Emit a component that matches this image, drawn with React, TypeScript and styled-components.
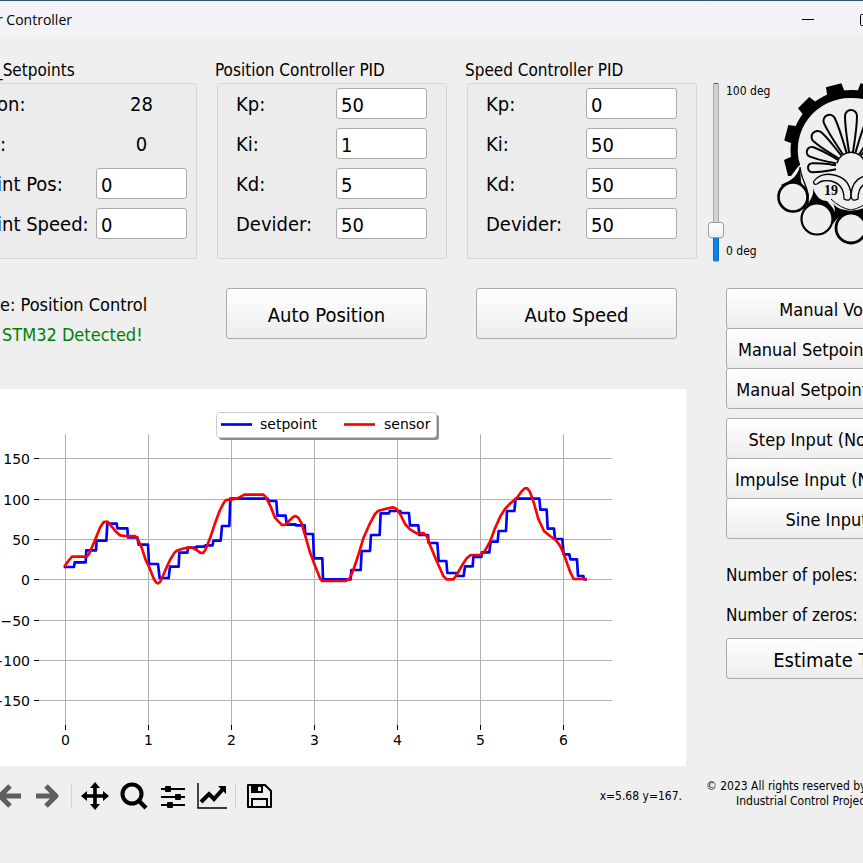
import React, { useState } from "react";
import styled, { createGlobalStyle } from "styled-components";

const uiFont = `"DejaVu Sans Condensed", "Noto Sans", sans-serif`;

const GlobalStyle = createGlobalStyle`
  *, *::before, *::after { box-sizing: border-box; }
  html, body { margin: 0; background: #efefef; overflow: hidden; }
  html, body, #root { min-height: 100vh; }
  body, button, input { font-family: ${uiFont}; color: #000; }
  h1, h2, p { margin: 0; font-weight: 400; }
`;

const Frame = styled.div`
  width: calc(100% + 64px);
  min-height: 100vh;
`;

const TitleBar = styled.header`
  display: flex;
  align-items: center;
  justify-content: space-between;
  height: 38px;
  border-top: 1px solid #33556b;
  background: linear-gradient(90deg, #f2f3f9 70%, #f1f2f4);
`;

const Title = styled.h1`
  margin-left: -3px;
  font: 400 14px/20px "Open Sans", "Noto Sans", sans-serif;
  white-space: nowrap;
`;

const WindowButtons = styled.div`
  display: flex;
  gap: 34px;
  padding-right: 49px;
`;

const WindowButton = styled.button`
  display: flex;
  width: 24px;
  height: 24px;
  padding: 6px;
  border: 0;
  background: none;
`;

const TopRow = styled.section`
  display: flex;
  align-items: flex-start;
  padding-top: 23px;
`;

const Groups = styled.div`
  display: flex;
  flex: 1;
  gap: 20px;
  min-width: 0;
`;

const Group = styled.section<{ $grow?: boolean }>`
  flex: ${(p) => (p.$grow ? "1 1 0" : "0 0 230px")};
  min-width: 0;
`;

const GroupTitle = styled.h2<{ $flush?: boolean }>`
  margin-left: ${(p) => (p.$flush ? "-5px" : "-2px")};
  font-size: 17px;
  line-height: 19px;
  height: 22px;
  white-space: nowrap;
`;

const GroupBox = styled.div<{ $open?: boolean }>`
  display: flex;
  flex-direction: column;
  gap: 9px;
  height: 176px;
  padding: 4px ${(p) => (p.$open ? "9px" : "19px")} 0 ${(p) => (p.$open ? "0" : "18px")};
  border: 1px solid #d6d6d6;
  border-left-width: ${(p) => (p.$open ? "0" : "1px")};
  border-radius: ${(p) => (p.$open ? "0 2px 2px 0" : "2px")};
  background: #ececec;
`;

const Field = styled.label`
  display: flex;
  align-items: center;
  justify-content: space-between;
  height: 31px;
  font-size: 20px;
  line-height: 24px;
  white-space: nowrap;
`;

const Caption = styled.span<{ $bleed?: boolean }>`
  margin-left: ${(p) => (p.$bleed ? "-3px" : "0")};
`;

const TextBox = styled.input`
  width: 91px;
  height: 31px;
  padding: 2px 4px 0;
  border: 1px solid #ababab;
  border-radius: 3px;
  background: #fff;
  font-size: 20px;
  outline: 0;
`;

const Reading = styled.output`
  width: 91px;
  text-align: center;
`;

const SliderBlock = styled.div`
  display: flex;
  gap: 2px;
  height: 179px;
  margin: 22px 0 0 11px;
`;

const Slider = styled.input<{ $value: number }>`
  appearance: none;
  writing-mode: vertical-lr;
  direction: rtl;
  width: 16px;
  height: 179px;
  margin: 0;
  background: none;

  &::-webkit-slider-runnable-track {
    width: 6px;
    height: 179px;
    border: 1px solid rgba(0, 0, 0, 0.2);
    border-radius: 2px;
    background: linear-gradient(0deg, #0a84e8 ${(p) => p.$value}%, #d2d2d2 ${(p) => p.$value}%);
  }

  &::-webkit-slider-thumb {
    appearance: none;
    width: 16px;
    height: 16px;
    margin-left: -6px;
    border: 1px solid #9c9c9c;
    border-radius: 3px;
    background: linear-gradient(#fff, #f0f0f0);
  }
`;

const ScaleLabels = styled.div`
  display: flex;
  flex-direction: column;
  justify-content: space-between;
  width: 50px;
  padding: 0 0 3px;
  font-size: 12px;
  line-height: 16px;
  white-space: nowrap;
`;

const EmblemSlot = styled.div`
  width: 151px;
  height: 165px;
  margin-top: 22px;
`;

const Workspace = styled.main`
  display: grid;
  grid-template-columns: minmax(0, 1fr) 201px;
  column-gap: 40px;
  padding-top: 26px;
`;

const Column = styled.div`
  min-width: 0;
`;

const ModeRow = styled.div`
  display: flex;
  align-items: flex-start;
  gap: 49px;
  height: 101px;
  padding-right: 9px;
`;

const Status = styled.div`
  flex: 1;
  min-width: 0;
  padding-top: 2px;
  font-size: 18px;
  line-height: 30px;
  white-space: nowrap;
`;

const Detected = styled.p`
  padding-left: 2px;
  color: #008000;
`;

const PushButton = styled.button<{ $size?: "large" | "medium" }>`
  flex: none;
  width: 201px;
  height: ${(p) => (p.$size === "large" ? "51px" : "41px")};
  padding: 2px 0 0;
  border: 1px solid #ababab;
  border-radius: 3px;
  background: linear-gradient(#fff, #ededed);
  font-size: ${(p) => (p.$size ? "20px" : "18px")};
  white-space: nowrap;
`;

const ButtonStack = styled.div`
  display: flex;
  flex-direction: column;
  margin-bottom: 9px;

  ${PushButton} + ${PushButton} { margin-top: -1px; }
`;

const Count = styled.p`
  font-size: 17px;
  line-height: 40px;
  white-space: nowrap;
`;

const Counts = styled.div`
  padding: 7px 0 3px;
`;

const Plot = styled.figure`
  height: 377px;
  margin: 0;
  background: #fff;

  svg { display: block; }
  text { font-family: "DejaVu Sans", sans-serif; font-size: 14px; }
`;

const ToolBar = styled.nav`
  display: flex;
  align-items: center;
  height: 60px;
  padding-right: 4px;
`;

const Tool = styled.button`
  display: flex;
  align-items: center;
  justify-content: center;
  flex: none;
  width: 39px;
  height: 32px;
  padding: 0;
  border: 0;
  background: none;

  &:first-child { width: 28px; justify-content: flex-start; }
`;

const Divider = styled.span`
  width: 1px;
  height: 25px;
  margin: 0 3px 0 4px;
  background: #d2d2d2;
`;

const Coordinates = styled.output`
  margin-left: auto;
  font-size: 12px;
`;

const Copyright = styled.footer`
  margin: 100px 0 0 -20px;
  font-size: 12px;
  line-height: 15px;
  white-space: nowrap;

  p + p { padding-left: 30px; }
`;

const SETPOINT =
  "195,534 222,534 224,520 257,520 259,484 288,484 290,455 319,455 322,404 350,404 352,418 382,418 384,445 412,445 416,467 444,467 447,525 474,525 479,567 506,567 510,533 536,533 538,491 562,491 564,476 590,476 590,473 614,473 616,469 638,469 640,455 662,455 666,411 688,411 691,329 803,329 807,336 829,336 832,380 857,380 860,407 887,406 888,409 914,409 916,435 939,435 942,508 967,508 969,571 1052,571 1054,543 1082,543 1085,486 1110,486 1113,438 1139,438 1142,373 1167,373 1169,366 1201,366 1202,372 1227,372 1230,409 1255,409 1258,438 1284,438 1286,462 1312,462 1316,516 1339,516 1342,552 1369,552 1370,561 1391,561 1395,532 1418,532 1420,504 1444,504 1446,490 1468,490 1472,458 1493,458 1496,426 1518,426 1521,366 1543,366 1547,329 1618,329 1621,362 1640,362 1643,419 1662,419 1665,450 1687,450 1691,496 1708,496 1711,511 1731,511 1734,561 1750,561 1752,571 1757,571";

const SENSOR =
  "195,530 205,516 216,503 260,503 268,493 285,453 300,416 311,399 322,398 333,410 345,425 360,439 375,441 405,441 412,448 425,476 437,513 447,533 462,571 468,580 474,583 480,579 490,558 497,541 510,513 522,493 530,485 545,480 560,476 575,476 590,483 600,491 609,492 616,483 630,448 645,403 660,363 672,340 678,333 695,331 712,328 722,323 733,317 790,317 798,325 812,353 825,386 838,400 846,408 856,407 870,393 878,385 886,381 894,385 905,403 918,448 930,490 945,530 960,568 966,576 1036,576 1048,570 1060,543 1075,498 1090,448 1110,403 1125,375 1134,366 1155,360 1178,355 1190,360 1202,378 1215,405 1230,421 1250,433 1270,432 1280,441 1290,468 1310,516 1330,561 1340,571 1360,571 1370,558 1385,531 1400,508 1412,498 1442,498 1455,485 1470,458 1485,418 1502,380 1515,360 1530,344 1550,328 1565,307 1574,298 1582,298 1590,309 1602,343 1615,390 1632,426 1650,441 1667,453 1680,470 1692,496 1710,548 1721,570 1757,570";

const X_TICKS = [65, 148, 231, 314, 397, 480, 563].map((x, i) => ({ x: x + 0.5, label: String(i) }));
const Y_TICKS = [
  { y: 69.5, label: "150" },
  { y: 110.5, label: "100" },
  { y: 150.5, label: "50" },
  { y: 190.5, label: "0" },
  { y: 231.5, label: "−50" },
  { y: 271.5, label: "−100" },
  { y: 311.5, label: "−150" },
];

function Chart() {
  return (
    <Plot>
      <svg width="100%" height="377" viewBox="0 0 686 377" preserveAspectRatio="xMinYMin meet" role="img" aria-label="setpoint and sensor">
        {X_TICKS.map(({ x, label }) => (
          <g key={label}>
            <path d={`M${x} 45V336`} stroke="#b0b0b0" />
            <path d={`M${x} 336v5`} stroke="#000" />
            <text x={x} y="356" textAnchor="middle">{label}</text>
          </g>
        ))}
        {Y_TICKS.map(({ y, label }) => (
          <g key={label}>
            <path d={`M39 ${y}H612`} stroke="#b0b0b0" />
            <path d={`M34 ${y}h5`} stroke="#000" />
            <text x="30" y={y + 5} textAnchor="end">{label}</text>
          </g>
        ))}
        <g transform="scale(0.33333)" fill="none" strokeWidth="8" strokeLinejoin="round" strokeLinecap="square">
          <polyline points={SETPOINT} stroke="#00f" />
          <polyline points={SENSOR} stroke="#f00" />
        </g>
        <rect x="219" y="26" width="220" height="25" rx="3" fill="#8c8c8c" />
        <rect x="216.5" y="23.5" width="220" height="25" rx="3" fill="#fff" stroke="#ccc" />
        <path d="M221 35.500h31" stroke="#00f" strokeWidth="2.700" />
        <text x="260" y="40">setpoint</text>
        <path d="M344 35.500h31" stroke="#f00" strokeWidth="2.700" />
        <text x="384" y="40">sensor</text>
      </svg>
    </Plot>
  );
}

const PETALS = [
  { angle: -25, length: 57, half: 6 },
  { angle: -48, length: 51, half: 6 },
  { angle: -69, length: 47, half: 5 },
  { angle: -91, length: 43, half: 4.5 },
];

function petalPath(l: number, w: number) {
  return `M-2-15C-4-28-${w}-${l - 17}-${w}-${l - w}A${w} ${w} 0 0 1 ${w}-${l - w}C${w}-${l - 17} 4-28 2-15`;
}

function EmblemHalf() {
  return (
    <>
      {[-15, -45, -75].map((a) => (
        <path key={a} d="M-9-58L-8-67H8L9-58Z" transform={`translate(75 67) rotate(${a})`} />
      ))}
      <path d="M8 77L19 72L24 81L15 93H12Z" />
      <path d="M75 7A60 60 0 0 0 18 87L24 82A52 52 0 0 1 75 15Z" />
      <path d="M5 102C13 98 20 96 24 84L25 99C27 104 31 105 31 111C31 119 30 123 30 128Z" />
      <path d="M24 84C25 96 31 102 32 112C33 120 31 124 30 128" fill="none" stroke="#000" strokeWidth="1.300" />
      <path d="M37 105C39 115 30 119 30 128L38 121C44 119 52 124 56 130L58 136C62 128 54 122 51 118C45 118 40 114 37 105Z" />
      <path d="M55 116C60 128 68 126 75 128V133C66 131 61 134 57 141L54 137C58 132 62 128 55 116Z" />
      <path d="M55 116Q64 125 75 127" fill="none" stroke="#000" />
      <g fill="#efefef" stroke="#000">
        <circle cx="17" cy="114" r="14.500" strokeWidth="2.600" />
        <circle cx="41" cy="136" r="15.500" strokeWidth="2.200" />
      </g>
      <g fill="none" stroke="#000" strokeWidth="2">
        {PETALS.map((p) => (
          <path key={p.angle} d={petalPath(p.length, p.half)} transform={`translate(75 84) rotate(${p.angle})`} />
        ))}
        <path strokeWidth="1.300" d="M38 98C42 92 50 90 58 92C68 94 74 101 75 111C75 118 72 118 68 116C68 106 64 100 55 98C48 97 45 98 41 101C38 102 37 100 38 98Z" />
      </g>
    </>
  );
}

function Emblem() {
  return (
    <svg width="150" height="165" viewBox="0 0 150 165" role="img" aria-label="University emblem">
      <EmblemHalf />
      <g transform="translate(150 0) scale(-1 1)">
        <EmblemHalf />
      </g>
      <path d={petalPath(57, 6)} transform="translate(75 84)" fill="none" stroke="#000" strokeWidth="2" />
      <path d="M61 80A14.500 14.500 0 0 1 89 80" fill="none" stroke="#000" strokeWidth="1.500" />
      <circle cx="75" cy="145" r="15" fill="#efefef" stroke="#000" strokeWidth="2.800" />
      <text x="48" y="112" fontFamily="Liberation Serif, serif" fontWeight="700" fontSize="14">19</text>
    </svg>
  );
}

function Arrow({ back }: { back?: boolean }) {
  return (
    <svg width="24" height="26" viewBox="0 0 24 26" fill="none" stroke="#5e5e5e" strokeWidth="5" strokeLinejoin="round">
      <path d={back ? "M21 13H0M10 3L0 13L10 23" : "M0 13H20M10 3L20 13L10 23"} />
    </svg>
  );
}

function PidGroup({ title, values }: { title: string; values: string[] }) {
  return (
    <Group>
      <GroupTitle>{title}</GroupTitle>
      <GroupBox>
        {["Kp:", "Ki:", "Kd:", "Devider:"].map((name, i) => (
          <Field key={name}>
            <Caption>{name}</Caption>
            <TextBox defaultValue={values[i]} />
          </Field>
        ))}
      </GroupBox>
    </Group>
  );
}

export default function App() {
  const [angle, setAngle] = useState(14);
  return (
    <>
      <GlobalStyle />
      <Frame>
        <TitleBar>
          <Title>r Controller</Title>
          <WindowButtons>
            <WindowButton aria-label="Minimize">
              <svg width="12" height="12" stroke="#000"><path d="M0 5.500H12" /></svg>
            </WindowButton>
            <WindowButton aria-label="Maximize">
              <svg width="12" height="12" fill="none" stroke="#000"><rect x="0.500" y="0.500" width="11" height="11" rx="1" /></svg>
            </WindowButton>
          </WindowButtons>
        </TitleBar>

        <TopRow>
          <Groups>
            <Group $grow>
              <GroupTitle $flush>_Setpoints</GroupTitle>
              <GroupBox $open>
                <Field as="div"><Caption $bleed>on:</Caption><Reading>28</Reading></Field>
                <Field as="div"><Caption>:</Caption><Reading>0</Reading></Field>
                <Field><Caption $bleed>int Pos:</Caption><TextBox defaultValue="0" /></Field>
                <Field><Caption $bleed>int Speed:</Caption><TextBox defaultValue="0" /></Field>
              </GroupBox>
            </Group>
            <PidGroup title="Position Controller PID" values={["50", "1", "5", "50"]} />
            <PidGroup title="Speed Controller PID" values={["0", "50", "50", "50"]} />
          </Groups>
          <SliderBlock>
            <Slider
              type="range"
              aria-label="Angle"
              $value={angle}
              value={angle}
              onChange={(e) => setAngle(Number(e.target.value))}
            />
            <ScaleLabels>
              <span>100 deg</span>
              <span>0 deg</span>
            </ScaleLabels>
          </SliderBlock>
          <EmblemSlot><Emblem /></EmblemSlot>
        </TopRow>

        <Workspace>
          <Column>
            <ModeRow>
              <Status>
                <p>e: Position Control</p>
                <Detected>STM32 Detected!</Detected>
              </Status>
              <PushButton $size="large">Auto Position</PushButton>
              <PushButton $size="large">Auto Speed</PushButton>
            </ModeRow>
            <Chart />
            <ToolBar>
              <Tool aria-label="Back"><Arrow back /></Tool>
              <Tool aria-label="Forward"><Arrow /></Tool>
              <Divider />
              <Tool aria-label="Pan">
                <svg width="28" height="28" viewBox="0 0 28 28">
                  <path d="M14 3V25M3 14H25" stroke="#000" strokeWidth="3.600" />
                  <path d="M14 0L19 6H9ZM14 28L9 22H19ZM0 14L6 9V19ZM28 14L22 19V9Z" />
                </svg>
              </Tool>
              <Tool aria-label="Zoom">
                <svg width="28" height="28" viewBox="0 0 28 28" fill="none" stroke="#000">
                  <circle cx="12" cy="12" r="9.500" strokeWidth="4" />
                  <path d="M18 18L26 26" strokeWidth="4.500" />
                </svg>
              </Tool>
              <Tool aria-label="Subplots">
                <svg width="26" height="26" viewBox="0 0 26 26">
                  <path d="M1 6H25M1 14H25M1 22H25" stroke="#000" strokeWidth="2" />
                  <rect x="5" y="3" width="6" height="6" rx="1" />
                  <rect x="15" y="11" width="6" height="6" rx="1" />
                  <rect x="7" y="19" width="6" height="6" rx="1" />
                </svg>
              </Tool>
              <Tool aria-label="Axes">
                <svg width="30" height="26" viewBox="0 0 30 26" fill="none" stroke="#000">
                  <path d="M1 0V25H30" strokeWidth="1.400" />
                  <path d="M4 19L12 11L17 16L26 6" strokeWidth="4" />
                  <path d="M21 3H29V11Z" fill="#000" stroke="none" />
                </svg>
              </Tool>
              <Divider />
              <Tool aria-label="Save">
                <svg width="26" height="26" viewBox="0 0 26 26" fill="none" stroke="#000" strokeWidth="2">
                  <path d="M2 2H19L25 8V24H2Z" strokeLinejoin="round" />
                  <path d="M6 23V16H21V23" />
                  <path d="M5 2H17V10H5Z" fill="#000" stroke="none" />
                  <path d="M12 4H15V8H12Z" fill="#efefef" stroke="none" />
                </svg>
              </Tool>
              <Coordinates>x=5.68 y=167.</Coordinates>
            </ToolBar>
          </Column>

          <Column>
            <ButtonStack>
              <PushButton>Manual Volt</PushButton>
              <PushButton>Manual Setpoint (Pos)</PushButton>
              <PushButton>Manual Setpoint (Spd)</PushButton>
            </ButtonStack>
            <ButtonStack>
              <PushButton>Step Input (No PID)</PushButton>
              <PushButton>Impulse Input (No PID)</PushButton>
              <PushButton>Sine Input</PushButton>
            </ButtonStack>
            <Counts>
              <Count>Number of poles:</Count>
              <Count>Number of zeros:</Count>
            </Counts>
            <PushButton $size="medium">Estimate TF</PushButton>
            <Copyright>
              <p>© 2023 All rights reserved by</p>
              <p>Industrial Control Project</p>
            </Copyright>
          </Column>
        </Workspace>
      </Frame>
    </>
  );
}
